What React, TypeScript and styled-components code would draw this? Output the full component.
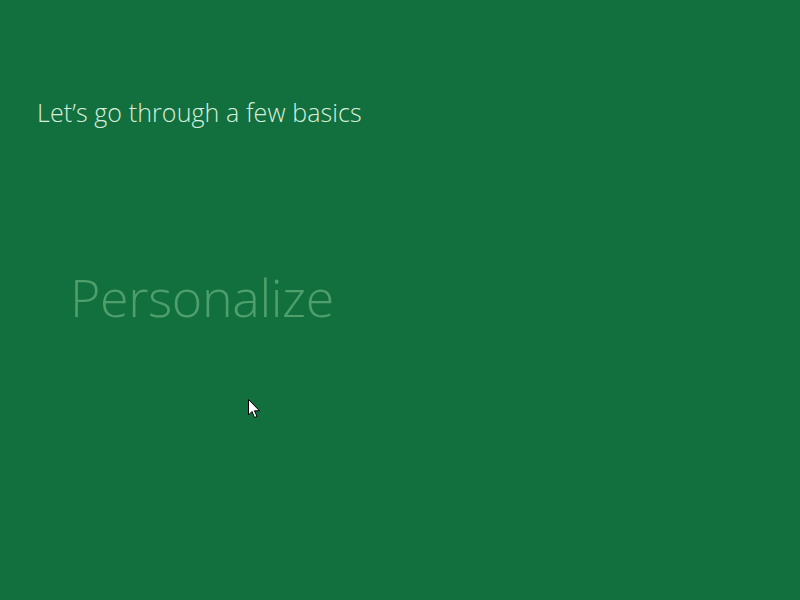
import styled, { createGlobalStyle } from "styled-components";

const GlobalStyle = createGlobalStyle`
  html, body {
    margin: 0;
    padding: 0;
    background-color: #12703f;
  }
  body {
    font-family: "Open Sans", "Noto Sans", sans-serif;
  }
`;

const Screen = styled.div`
  width: 800px;
  height: 600px;
  background-color: #12703f;
  display: flex;
  flex-direction: column;
  overflow: hidden;
`;

const Heading = styled.h1`
  margin: 95px 0 0 37px;
  font-size: 25px;
  font-weight: 300;
  line-height: 34px;
  letter-spacing: 0.1px;
  color: #d8eedc;
`;

const Step = styled.div`
  margin: 134px 0 0 70px;
  font-size: 52px;
  font-weight: 300;
  line-height: 68px;
  letter-spacing: -0.4px;
  color: #4e9f6c;
`;

const CursorRow = styled.div`
  margin: 68px 0 0 248px;
  width: 13px;
  height: 20px;
`;

const Cursor = () => (
  <svg width="13" height="20" viewBox="0 0 13 20">
    <path
      d="M0.5 0.5 L0.5 16 L4 12.5 L6.5 18.5 L9 17.5 L6.5 11.8 L11.5 11.8 Z"
      fill="#ffffff"
      stroke="#000000"
      strokeWidth="1"
      strokeLinejoin="miter"
    />
  </svg>
);

const App = () => {
  return (
    <Screen>
      <GlobalStyle />
      <Heading>Let’s go through a few basics</Heading>
      <Step>Personalize</Step>
      <CursorRow>
        <Cursor />
      </CursorRow>
    </Screen>
  );
};

export default App;
